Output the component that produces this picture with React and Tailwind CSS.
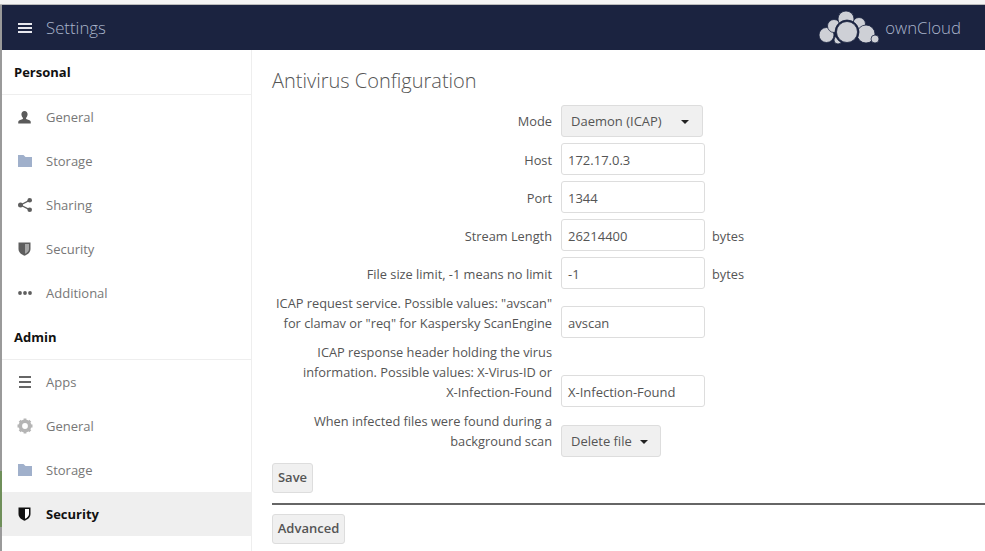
import React from "react";

const Person = () => (
  <svg width="15" height="15" viewBox="0 0 16 16" fill="#5a5a5a">
    <path d="M8 1c2 0 3.300 1.500 3.300 3.500 0 1.600-.8 3-1.600 3.800v1.200c1.800.6 4.300 1.300 4.800 2.500.2.600.2 1.700.2 2.500H1.300c0-.8 0-1.900.2-2.500.5-1.200 3-1.900 4.800-2.500V8.300C5.500 7.500 4.700 6.100 4.700 4.500 4.700 2.500 6 1 8 1z" />
  </svg>
);
const Folder = () => (
  <svg width="14" height="12" viewBox="0 0 14 12" fill="#a0b0cb">
    <path d="M0 0h5.500l2 2H14v10H0z" />
  </svg>
);
const Share = () => (
  <svg width="14" height="14" viewBox="0 0 14 14" fill="#5e5e5e">
    <circle cx="11.700" cy="2.300" r="2.300" />
    <circle cx="11.700" cy="11.700" r="2.300" />
    <circle cx="2.500" cy="7" r="2.500" />
    <path d="M2.500 7l9-4.700M2.500 7l9 4.700" stroke="#5e5e5e" strokeWidth="1.400" />
  </svg>
);
const Shield = ({ color = "#5e5e5e", opacity = 0.45 }) => (
  <svg width="13" height="14" viewBox="0 0 13 14">
    <path d="M0.500 0.500h12v6.500c0 3.300-2.800 5.500-6 6.700-3.200-1.200-6-3.400-6-6.700z" fill={color} />
    <path d="M7 2H11v5c0 2.300-1.800 3.700-4 4.800z" fill="#fff" fillOpacity={opacity} />
  </svg>
);
const Dots = () => (
  <svg width="14" height="4" viewBox="0 0 14 4" fill="#5e5e5e">
    <circle cx="2" cy="2" r="1.900" />
    <circle cx="7" cy="2" r="1.900" />
    <circle cx="12" cy="2" r="1.900" />
  </svg>
);
const Bars = ({ color = "#666", w = 12, h = 12 }) => (
  <svg width={w} height={h} viewBox={`0 0 ${w} ${h}`} fill={color}>
    <rect width={w} height="2" y="0" />
    <rect width={w} height="2" y={(h - 2) / 2} />
    <rect width={w} height="2" y={h - 2} />
  </svg>
);
const Gear = () => (
  <svg width="16" height="16" viewBox="0 0 16 16">
    <circle cx="8" cy="8" r="4.700" fill="none" stroke="#b5b5b5" strokeWidth="3.600" />
    <path
      d="M8 0.500V3M8 13v2.500M0.500 8H3M13 8h2.500M2.700 2.700l1.800 1.800M11.500 11.500l1.800 1.800M13.300 2.700l-1.800 1.800M4.500 11.500l-1.800 1.800"
      stroke="#b5b5b5"
      strokeWidth="2.800"
    />
  </svg>
);
const Logo = () => (
  <svg width="60" height="34" viewBox="0 0 60 34" fill="#ced0d6" stroke="#1b2340" strokeWidth="0.800">
    <circle cx="7.500" cy="24" r="7.500" />
    <circle cx="15" cy="15" r="6.500" />
    <circle cx="40" cy="13" r="6.500" />
    <circle cx="27" cy="8" r="8" />
    <circle cx="47" cy="23" r="9" />
    <circle cx="56" cy="28" r="4" />
    <circle cx="19" cy="29" r="4" />
    <circle cx="28" cy="21" r="12" fill="#1b2340" />
    <circle cx="28" cy="21" r="10.500" />
  </svg>
);

const Caret = () => <span className="inline-block border-x-[4px] border-t-[4px] border-x-transparent border-t-[#222]" />;

const items1 = [
  [<Person />, "General"],
  [<Folder />, "Storage"],
  [<Share />, "Sharing"],
  [<Shield />, "Security"],
  [<Dots />, "Additional"],
];
const items2 = [
  [<Bars />, "Apps"],
  [<Gear />, "General"],
  [<Folder />, "Storage"],
  [<Shield color="#111" opacity={1} />, "Security", true],
];

function NavItem({ icon, label, active }) {
  return (
    <div className={`flex h-11 items-center ${active ? "bg-[#efefef] font-bold text-[#111]" : "text-[#777]"}`}>
      <span className="flex w-[44px] justify-center pl-[1px]">{icon}</span>
      <span className="pt-[2px]">{label}</span>
    </div>
  );
}

function Section({ title, children }) {
  return (
    <>
      <div className="flex h-[45px] items-center border-b border-[#eee] pt-[2px] pl-3 font-bold text-[#111]">{title}</div>
      {children}
    </>
  );
}

function Row({ label, h, children, after, pb = "pb-[5px]" }) {
  return (
    <div className={`flex items-end ${h}`}>
      <div className={`w-[289px] pr-[9px] text-right text-[12.8px] leading-5 whitespace-nowrap text-[#555] ${pb}`}>{label}</div>
      {children}
      {after && <span className="ml-[7px] pb-[5px] text-[12.8px] leading-5 text-[#555]">{after}</span>}
    </div>
  );
}

const inputCls = "h-[32px] w-[144px] rounded-[3px] border border-[#ddd] bg-white px-[6px] leading-[32px] text-[#555]";
const btnCls = "flex items-center rounded-[3px] border border-[#ddd] bg-[#f0f0f0] text-[#555]";

export default function App() {
  return (
    <div className="flex h-[551px] w-[985px] flex-col overflow-hidden bg-white font-['Open_Sans',sans-serif] text-[13px]">
      <div className="h-[5px] shrink-0 border-b border-[#bbb] bg-[#f4f4f4]" />
      <div className="flex flex-1 overflow-hidden">
        <div className="flex w-[2px] shrink-0 flex-col bg-[#9a9a9a]">
          <div className="mt-[466px] h-[56px] bg-[#6f8f5a]" />
        </div>
        <div className="flex min-w-0 flex-1 flex-col">
          <header className="flex h-[45px] shrink-0 items-center justify-between bg-[#1b2340]">
            <div className="flex items-center">
              <span className="flex w-[44px] justify-center pl-[1px]">
                <Bars color="#e8e8ee" w={14} h={10} />
              </span>
              <span className="text-[16.8px] font-light text-[#a9b4cb]">Settings</span>
            </div>
            <div className="flex items-center gap-[6px] pr-6">
              <Logo />
              <span className="text-[16.8px] font-light text-[#a9b4cb]">ownCloud</span>
            </div>
          </header>
          <div className="flex min-h-0 flex-1">
            <nav className="h-full w-[250px] shrink-0 border-r border-[#eee]">
              <Section title="Personal">
                {items1.map(([i, l]) => (
                  <NavItem key={l} icon={i} label={l} />
                ))}
              </Section>
              <Section title="Admin">
                {items2.map(([i, l, a]) => (
                  <NavItem key={l} icon={i} label={l} active={a} />
                ))}
              </Section>
            </nav>
            <main className="min-w-0 flex-1 pt-[16px] pl-5">
              <h2 className="mb-[10px] h-[28px] text-[20px] leading-[30px] font-light text-[#555]">Antivirus Configuration</h2>
              <div className="flex flex-col">
                <Row label="Mode" h="h-[33px]" pb="pb-[6px]">
                  <div className={`${btnCls} h-[32px] w-[142px] justify-between pt-[2px] pr-[13px] pl-[9px]`}>
                    Daemon (ICAP) <Caret />
                  </div>
                </Row>
                <Row label="Host" h="h-[38px]"><div className={inputCls}>172.17.0.3</div></Row>
                <Row label="Port" h="h-[38px]"><div className={inputCls}>1344</div></Row>
                <Row label="Stream Length" h="h-[38px]" after="bytes"><div className={inputCls}>26214400</div></Row>
                <Row label="File size limit, -1 means no limit" h="h-[38px]" after="bytes"><div className={inputCls}>-1</div></Row>
                <Row label={<>ICAP request service. Possible values: "avscan"<br />for clamav or "req" for Kaspersky ScanEngine</>} h="h-[49px]">
                  <div className={inputCls}>avscan</div>
                </Row>
                <Row label={<>ICAP response header holding the virus<br />information. Possible values: X-Virus-ID or<br />X-Infection-Found</>} h="h-[69px]">
                  <div className={inputCls}>X-Infection-Found</div>
                </Row>
                <Row label={<>When infected files were found during a<br />background scan</>} h="h-[50px]" pb="pb-[6px]">
                  <div className={`${btnCls} h-[32px] w-[100px] justify-between pt-[2px] pr-[12px] pl-[9px]`}>
                    Delete file <Caret />
                  </div>
                </Row>
              </div>
              <div className={`${btnCls} mt-[6px] h-[30px] w-[41px] justify-center font-semibold`}>Save</div>
              <div className="mt-[10px] h-[2px] bg-[#666]" />
              <div className={`${btnCls} mt-[9px] h-[30px] w-[73px] justify-center font-semibold`}>Advanced</div>
            </main>
          </div>
        </div>
      </div>
    </div>
  );
}
